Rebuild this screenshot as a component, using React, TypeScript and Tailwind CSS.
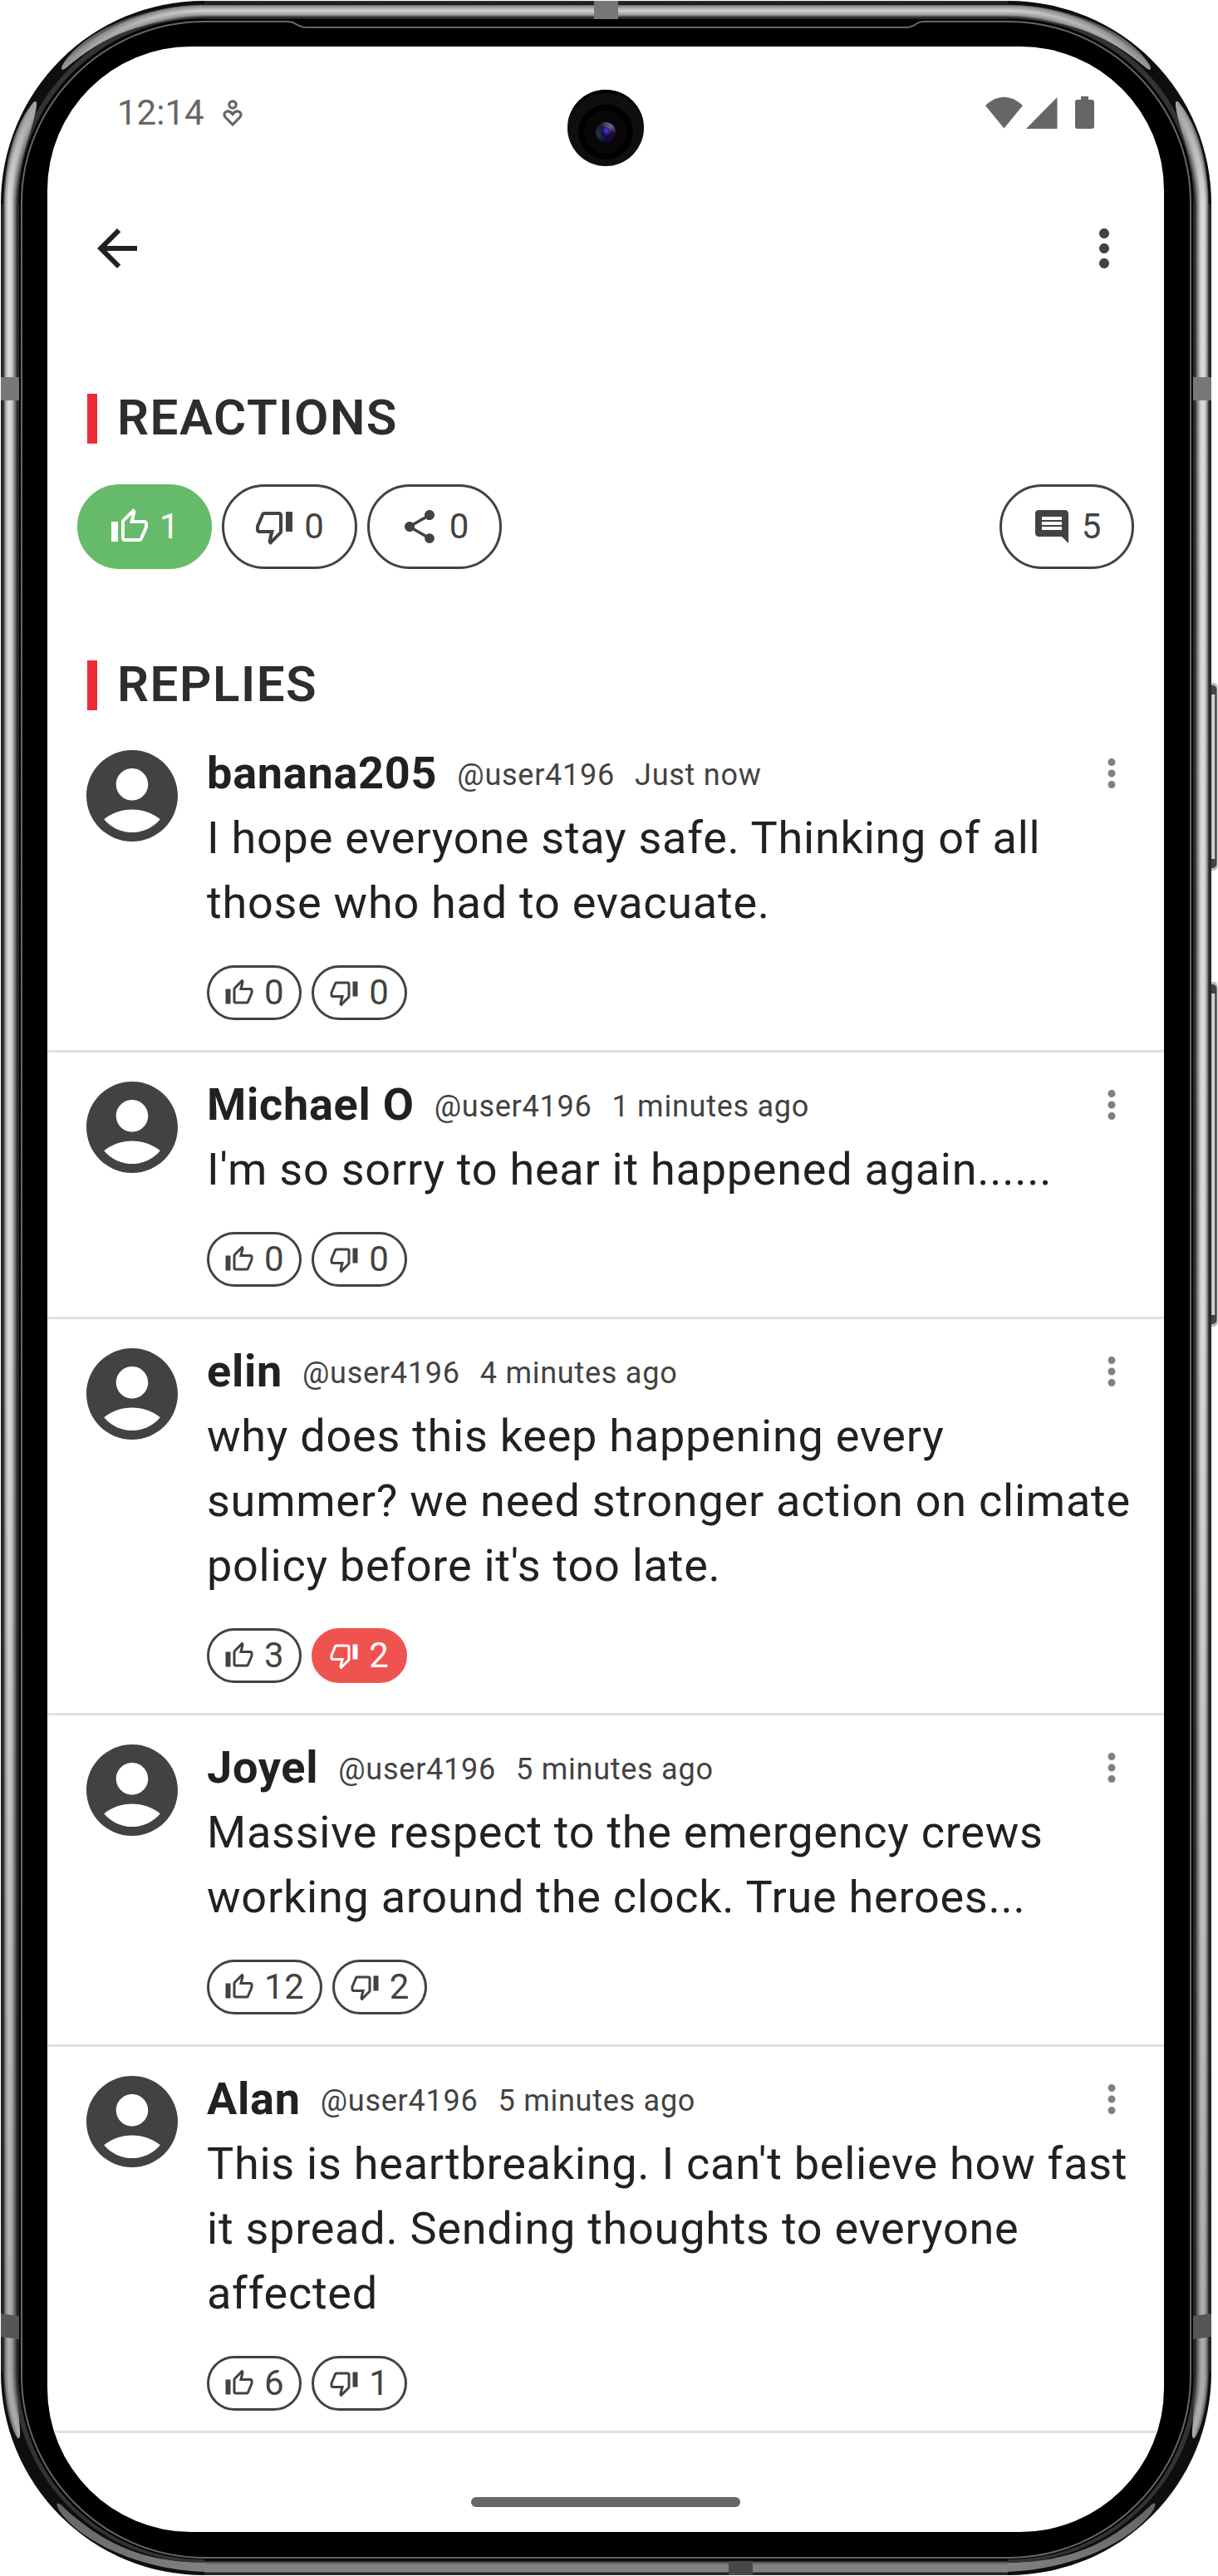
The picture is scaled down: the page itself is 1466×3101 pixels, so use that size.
import React from "react";

type Reply = {
  name: string;
  handle: string;
  time: string;
  lines: string[];
  up: number;
  down: number;
  disliked?: boolean;
};

const replies: Reply[] = [
  { name: "banana205", handle: "@user4196", time: "Just now", lines: ["I hope everyone stay safe. Thinking of all", "those who had to evacuate."], up: 0, down: 0 },
  { name: "Michael O", handle: "@user4196", time: "1 minutes ago", lines: ["I'm so sorry to hear it happened again......"], up: 0, down: 0 },
  { name: "elin", handle: "@user4196", time: "4 minutes ago", lines: ["why does this keep happening every", "summer? we need stronger action on climate", "policy before it's too late."], up: 3, down: 2, disliked: true },
  { name: "Joyel", handle: "@user4196", time: "5 minutes ago", lines: ["Massive respect to the emergency crews", "working around the clock. True heroes..."], up: 12, down: 2 },
  { name: "Alan", handle: "@user4196", time: "5 minutes ago", lines: ["This is heartbreaking. I can't believe how fast", "it spread. Sending thoughts to everyone", "affected"], up: 6, down: 1 },
];

type IconProps = { className?: string };

const Svg = ({ className, children }: IconProps & { children: React.ReactNode }) => (
  <svg viewBox="0 0 24 24" fill="currentColor" className={"shrink-0 " + (className ?? "")}>
    {children}
  </svg>
);

const ThumbUp = ({ className }: IconProps) => (
  <Svg className={className}>
    <path d="M9 21h9c.83 0 1.54-.5 1.84-1.22l3.02-7.05c.09-.23.14-.47.14-.73v-2c0-1.1-.9-2-2-2h-6.31l.95-4.57.03-.32c0-.41-.17-.79-.44-1.06L14.17 1 7.58 7.59C7.22 7.95 7 8.45 7 9v10c0 1.1.9 2 2 2zM9 9l4.34-4.34L12 10h9v2l-3 7H9V9zM1 9h4v12H1z" />
  </Svg>
);

const ThumbDown = ({ className }: IconProps) => (
  <Svg className={className}>
    <path d="M15 3H6c-.83 0-1.54.5-1.84 1.22l-3.02 7.05c-.09.23-.14.47-.14.73v2c0 1.1.9 2 2 2h6.31l-.95 4.57-.03.32c0 .41.17.79.44 1.06L9.83 23l6.59-6.59c.36-.36.58-.86.58-1.41V5c0-1.1-.9-2-2-2zm0 12l-4.34 4.34L12 14H3v-2l3-7h9v10zm4-12h4v12h-4z" />
  </Svg>
);

const Share = ({ className }: IconProps) => (
  <Svg className={className}>
    <path d="M18 16.08c-.76 0-1.44.3-1.96.77L8.91 12.7c.05-.23.09-.46.09-.7s-.04-.47-.09-.7l7.05-4.11c.54.5 1.25.81 2.04.81 1.66 0 3-1.34 3-3s-1.34-3-3-3-3 1.34-3 3c0 .24.04.47.09.7L8.04 9.81C7.5 9.31 6.79 9 6 9c-1.66 0-3 1.34-3 3s1.34 3 3 3c.79 0 1.5-.31 2.04-.81l7.12 4.16c-.05.21-.08.43-.08.65 0 1.61 1.31 2.92 2.92 2.92s2.92-1.31 2.92-2.92-1.31-2.92-2.92-2.92z" />
  </Svg>
);

const Comment = ({ className }: IconProps) => (
  <Svg className={className}>
    <path d="M21.99 4c0-1.1-.89-2-1.99-2H4c-1.1 0-2 .9-2 2v12c0 1.1.9 2 2 2h14l4 4-.01-18zM18 14H6v-2h12v2zm0-3H6V9h12v2zm0-3H6V6h12v2z" />
  </Svg>
);

const Account = ({ className }: IconProps) => (
  <Svg className={className}>
    <path d="M12 2C6.48 2 2 6.48 2 12s4.48 10 10 10 10-4.48 10-10S17.52 2 12 2zm0 4c1.93 0 3.5 1.57 3.5 3.5S13.93 13 12 13s-3.5-1.57-3.5-3.5S10.07 6 12 6zm0 14c-2.03 0-4.43-.82-6.14-2.88C7.55 15.8 9.68 15 12 15s4.45.8 6.14 2.12C16.43 19.18 14.03 20 12 20z" />
  </Svg>
);

const MoreVert = ({ className }: IconProps) => (
  <Svg className={className}>
    <path d="M12 8c1.1 0 2-.9 2-2s-.9-2-2-2-2 .9-2 2 .9 2 2 2zm0 2c-1.1 0-2 .9-2 2s.9 2 2 2 2-.9 2-2-.9-2-2-2zm0 6c-1.1 0-2 .9-2 2s.9 2 2 2 2-.9 2-2-.9-2-2-2z" />
  </Svg>
);

const ArrowBack = ({ className }: IconProps) => (
  <Svg className={className}>
    <path d="M20 11H7.83l5.59-5.59L12 4l-8 8 8 8 1.41-1.41L7.83 13H20v-2z" />
  </Svg>
);

/* Metal band profiles: [depth in px from the outer edge, colour]. */
type Profile = [number, string][];

const sideProfile: Profile = [[0, "#222"], [3, "#2c2c2c"], [5.3, "#999"], [8.8, "#dcdcdc"], [12.8, "#d2d2d2"], [17, "#777"], [19.4, "#303030"], [22, "#2a2a2a"]];
const topProfile: Profile = [[0, "#333"], [4.2, "#151515"], [6, "#888"], [12, "#d2d2d2"], [17, "#999"], [19.6, "#333"], [22, "#222"]];
const lowerSideProfile: Profile = [[0, "#1c1c1c"], [3, "#262626"], [5.3, "#7a7a7a"], [8.8, "#acacac"], [12.8, "#a6a6a6"], [17, "#606060"], [19.4, "#282828"], [22, "#2a2a2a"]];
const bottomProfile: Profile = [[0, "#333"], [2.6, "#1c1c1c"], [4.2, "#848484"], [12.5, "#808080"], [15.5, "#555"], [17, "#111"], [22, "#000"]];

const CORNER = 245;

function LinearBand({ id, profile, x1, y1, x2, y2 }: { id: string; profile: Profile; x1: number; y1: number; x2: number; y2: number }) {
  return (
    <linearGradient id={id} x1={x1} y1={y1} x2={x2} y2={y2} gradientUnits="userSpaceOnUse">
      {profile.map(([d, c]) => (
        <stop key={d} offset={d / 22} stopColor={c} />
      ))}
    </linearGradient>
  );
}

function RadialBand({ id, profile, cy }: { id: string; profile: Profile; cy: number }) {
  return (
    <radialGradient id={id} cx="246" cy={cy} r={CORNER} gradientUnits="userSpaceOnUse">
      {[...profile].reverse().map(([d, c]) => (
        <stop key={d} offset={1 - d / CORNER} stopColor={c} />
      ))}
    </radialGradient>
  );
}

/* Reflections along the left half of the metal band; mirrored for the right half. */
function BandHalf() {
  return (
    <g>
      <rect x="1" y="246" width="22" height="2610" fill="url(#sideBand)" />
      <rect x="3" y="1600" width="20" height="1256" fill="url(#sideFade)" />
      <rect x="246" y="1" width="484" height="22" fill="url(#topBand)" />
      <rect x="246" y="3078" width="484" height="22" fill="url(#bottomBand)" />
      <path d="M247 5C178 6 104 34 76 77Q71 87 79 82C126 42 172 23 247 22Z" fill="url(#cornerTop)" />
      <path d="M247 5C178 6 104 34 76 77Q71 87 79 82C126 42 172 23 247 22Z" fill="url(#shadeTop)" />
      <path d="M4 247C5 200 14 157 38 126Q44 118 44 126C40 160 22 185 21 247Z" fill="url(#cornerSide)" />
      <path d="M4 247C5 200 14 157 38 126Q44 118 44 126C40 160 22 185 21 247Z" fill="url(#shadeSide)" />
      <path d="M4 2855C4 2890 11 2920 21 2935Q25 2937 24 2925C22 2900 21 2880 21 2855Z" fill="url(#cornerLowerSide)" />
      <path d="M247 3096C170 3094 97 3060 71 3022Q65 3010 73 3015C130 3069 180 3084 247 3085Z" fill="url(#glossBottom)" />
      <rect x="1" y="454" width="22" height="28" fill="#777" />
      <path d="M1 2785l22 3v28l-22-3z" fill="#565656" />
    </g>
  );
}

function Frame() {
  return (
    <svg viewBox="0 0 1466 3101" className="absolute inset-0 h-[3101px] w-[1466px]" fill="none">
      <defs>
        <LinearBand id="sideBand" profile={sideProfile} x1={1} y1={0} x2={23} y2={0} />
        <LinearBand id="topBand" profile={topProfile} x1={0} y1={1} x2={0} y2={23} />
        <LinearBand id="bottomBand" profile={bottomProfile} x1={0} y1={3100} x2={0} y2={3078} />
        <RadialBand id="cornerTop" profile={topProfile} cy={246} />
        <RadialBand id="cornerSide" profile={sideProfile} cy={246} />
        <RadialBand id="cornerLowerSide" profile={lowerSideProfile} cy={2855} />
        <linearGradient id="sideFade" x1="0" y1="1600" x2="0" y2="2856" gradientUnits="userSpaceOnUse">
          <stop offset="0" stopColor="#000" stopOpacity="0" />
          <stop offset="1" stopColor="#000" stopOpacity="0.22" />
        </linearGradient>
        <linearGradient id="shadeTop" x1="76" y1="80" x2="246" y2="13" gradientUnits="userSpaceOnUse">
          <stop offset="0" stopColor="#909090" stopOpacity="0.85" />
          <stop offset="1" stopColor="#909090" stopOpacity="0" />
        </linearGradient>
        <linearGradient id="shadeSide" x1="40" y1="122" x2="12" y2="246" gradientUnits="userSpaceOnUse">
          <stop offset="0" stopColor="#999" stopOpacity="0.85" />
          <stop offset="1" stopColor="#999" stopOpacity="0" />
        </linearGradient>
        <linearGradient id="glossBottom" x1="70" y1="3016" x2="246" y2="3090" gradientUnits="userSpaceOnUse">
          <stop offset="0" stopColor="#666" />
          <stop offset="1" stopColor="#808080" />
        </linearGradient>
        <linearGradient id="key" x1="1457" y1="0" x2="1466" y2="0" gradientUnits="userSpaceOnUse">
          <stop offset="0" stopColor="#bbb" />
          <stop offset="0.5" stopColor="#d6d6d6" />
          <stop offset="0.65" stopColor="#333" />
          <stop offset="1" stopColor="#aaa" />
        </linearGradient>
      </defs>
      {[[822, 226], [1182, 415]].map(([y, h]) => (
        <g key={y}>
          <rect x="1452" y={y} width="13.5" height={h} rx="5" fill="#bbb" />
          <rect x="1452" y={y + 3} width="12.5" height={h - 6} rx="5" fill="#444" />
          <rect x="1452" y={y + 14} width="12.5" height={h - 28} fill="url(#key)" />
        </g>
      ))}
      <rect x="1" y="1" width="1457" height="3099" rx="244" fill="#0e0e0e" />
      <rect x="19" y="19" width="1421" height="3063" rx="226" stroke="#333" strokeWidth="6" />
      <BandHalf />
      <g transform="translate(1459 0) scale(-1 1)">
        <BandHalf />
      </g>
      <rect x="715" y="1" width="29" height="22" fill="#777" />
      <rect x="877" y="3083" width="29" height="17" fill="#484848" />
      <rect x="23" y="23" width="1413" height="3058" rx="221" fill="#000" />
      <path
        d="M246 26H346C358 26 356 33 370 33H1090C1104 33 1100 26 1112 26H1214C1334 26 1433 124 1433 244V2860C1433 2980 1334 3079 1214 3079H246C126 3079 26 2980 26 2860V244C26 124 126 26 246 26Z"
        stroke="#666"
        strokeWidth="2"
      />
    </svg>
  );
}

function Camera() {
  return (
    <div className="absolute top-[108px] left-[683px] flex h-[92px] w-[92px] items-center justify-center rounded-full bg-[#0e0e0e] shadow-[inset_0_5px_0_-1px_#000]">
      <div className="mt-2.5 flex h-[66px] w-[66px] items-center justify-center rounded-full border-[7px] border-black bg-[#070707]">
        <div className="flex h-6 w-6 items-center justify-center rounded-full bg-[conic-gradient(#5a4070,#7a5a90_12%,#1c0a2c_28%,#0c0c40_50%,#1c3840_70%,#141c2c_90%,#5a4070)]">
          <div className="h-3 w-3 rounded-full bg-[radial-gradient(circle_at_60%_35%,#5a3ad8,#12084a_60%)]" />
        </div>
      </div>
    </div>
  );
}

function SectionTitle({ children }: { children: string }) {
  return (
    <div className="ml-12 flex h-[60px] items-center">
      <div className="h-[60px] w-3 bg-[#ed2b36]" />
      <h2 className="-mt-[3px] ml-6 text-[60px] leading-[60px] font-semibold tracking-[1.5px] text-[#2d2d2d]">{children}</h2>
    </div>
  );
}

function BigPill({ icon, count, active }: { icon: React.ReactNode; count: number; active?: boolean }) {
  return (
    <button className={"flex h-[102px] items-center gap-3 rounded-full border-[3px] px-9 " + (active ? "border-[#66bb6a] bg-[#66bb6a] text-white" : "border-[#424242] text-[#424242]")}>
      {icon}
      <span className="text-[42px] leading-none tracking-[0.75px]">{count}</span>
    </button>
  );
}

function SmallPill({ icon, count, active }: { icon: React.ReactNode; count: number; active?: boolean }) {
  return (
    <button className={"flex h-[66px] items-center gap-3 rounded-full border-[3px] px-[18px] " + (active ? "border-[#ef5350] bg-[#ef5350] text-white" : "border-[#424242] text-[#424242]")}>
      {icon}
      <span className="text-[42px] leading-none tracking-[0.75px]">{count}</span>
    </button>
  );
}

function ReplyRow({ reply, last }: { reply: Reply; last: boolean }) {
  return (
    <article className={"flex border-b-[3px] border-[#e0e0e0] pt-6 pl-9 " + (last ? "pb-6" : "pb-9")}>
      <Account className="h-[132px] w-[132px] text-[#424242]" />
      <div className="ml-6 flex-1">
        <header className="flex h-[78px] items-start leading-[78px] tracking-[0.75px] whitespace-nowrap">
          <span className="text-[54px] font-bold text-[#212121]">{reply.name}</span>
          <span className="ml-6 pt-0.5 text-[36px] text-[#424242]">{reply.handle}</span>
          <span className="ml-6 pt-0.5 text-[36px] text-[#424242]">{reply.time}</span>
          <MoreVert className="mr-9 ml-auto h-[54px] w-[54px] self-center text-[#808080]" />
        </header>
        <p className="text-[54px] leading-[78px] tracking-[0.75px] whitespace-nowrap text-[#212121]">
          {reply.lines.map((line) => (
            <span key={line} className="block">{line}</span>
          ))}
        </p>
        <div className="mt-9 flex gap-3">
          <SmallPill icon={<ThumbUp className="h-9 w-9" />} count={reply.up} />
          <SmallPill icon={<ThumbDown className="h-9 w-9" />} count={reply.down} active={reply.disliked} />
        </div>
      </div>
    </article>
  );
}

function StatusBar() {
  return (
    <div className="flex h-[156px] items-center pt-1 pr-[83px] pl-[84px] text-[#666]">
      <span className="text-[42px] leading-none">12:14</span>
      <svg viewBox="0 0 24 32" className="ml-[22px] h-8 w-6" fill="none" stroke="currentColor" strokeWidth="3.2">
        <circle cx="12" cy="6" r="4.2" />
        <path d="M12 30L3.2 21C-1 15.5 6.5 10.5 12 17.5C17.5 10.5 25 15.5 20.8 21Z" />
      </svg>
      <svg viewBox="0 0 132 40" className="ml-auto h-10 w-[132px]" fill="currentColor">
        <path d="M0 11Q22.5-9.5 45 11L22.5 38.5Z" />
        <path d="M49 39L86.5 1V39Z" />
        <path d="M115 0h9v4h4q3 0 3 3v29q0 3-3 3h-17q-3 0-3-3V7q0-3 3-3h4z" />
      </svg>
    </div>
  );
}

export default function App() {
  return (
    <main className="relative flex h-[3101px] w-[1466px] items-start overflow-hidden bg-white font-['Roboto',sans-serif]">
      <Frame />
      <div className="relative mt-[56px] ml-[57px] flex h-[2992px] w-[1344px] flex-col overflow-hidden rounded-[173px] bg-white">
        <StatusBar />
        <nav className="flex h-[174px] items-center justify-between pr-9 pl-12">
          <ArrowBack className="h-[72px] w-[72px] text-[#212121]" />
          <MoreVert className="h-[84px] w-[72px] text-[#424242]" />
        </nav>
        <section className="mt-[88px]">
          <SectionTitle>REACTIONS</SectionTitle>
          <div className="mt-[49px] flex gap-3 px-9">
            <BigPill active icon={<ThumbUp className="h-12 w-12" />} count={1} />
            <BigPill icon={<ThumbDown className="h-12 w-12" />} count={0} />
            <BigPill icon={<Share className="h-12 w-12" />} count={0} />
            <div className="ml-auto">
              <BigPill icon={<Comment className="h-12 w-12" />} count={5} />
            </div>
          </div>
        </section>
        <section className="mt-[110px]">
          <SectionTitle>REPLIES</SectionTitle>
          <div className="mt-[13px]">
            {replies.map((reply, i) => (
              <ReplyRow key={reply.name} reply={reply} last={i === replies.length - 1} />
            ))}
          </div>
        </section>
        <div className="mt-auto mb-[30px] h-3 w-[324px] self-center rounded-full bg-[#666]" />
      </div>
      <Camera />
    </main>
  );
}
